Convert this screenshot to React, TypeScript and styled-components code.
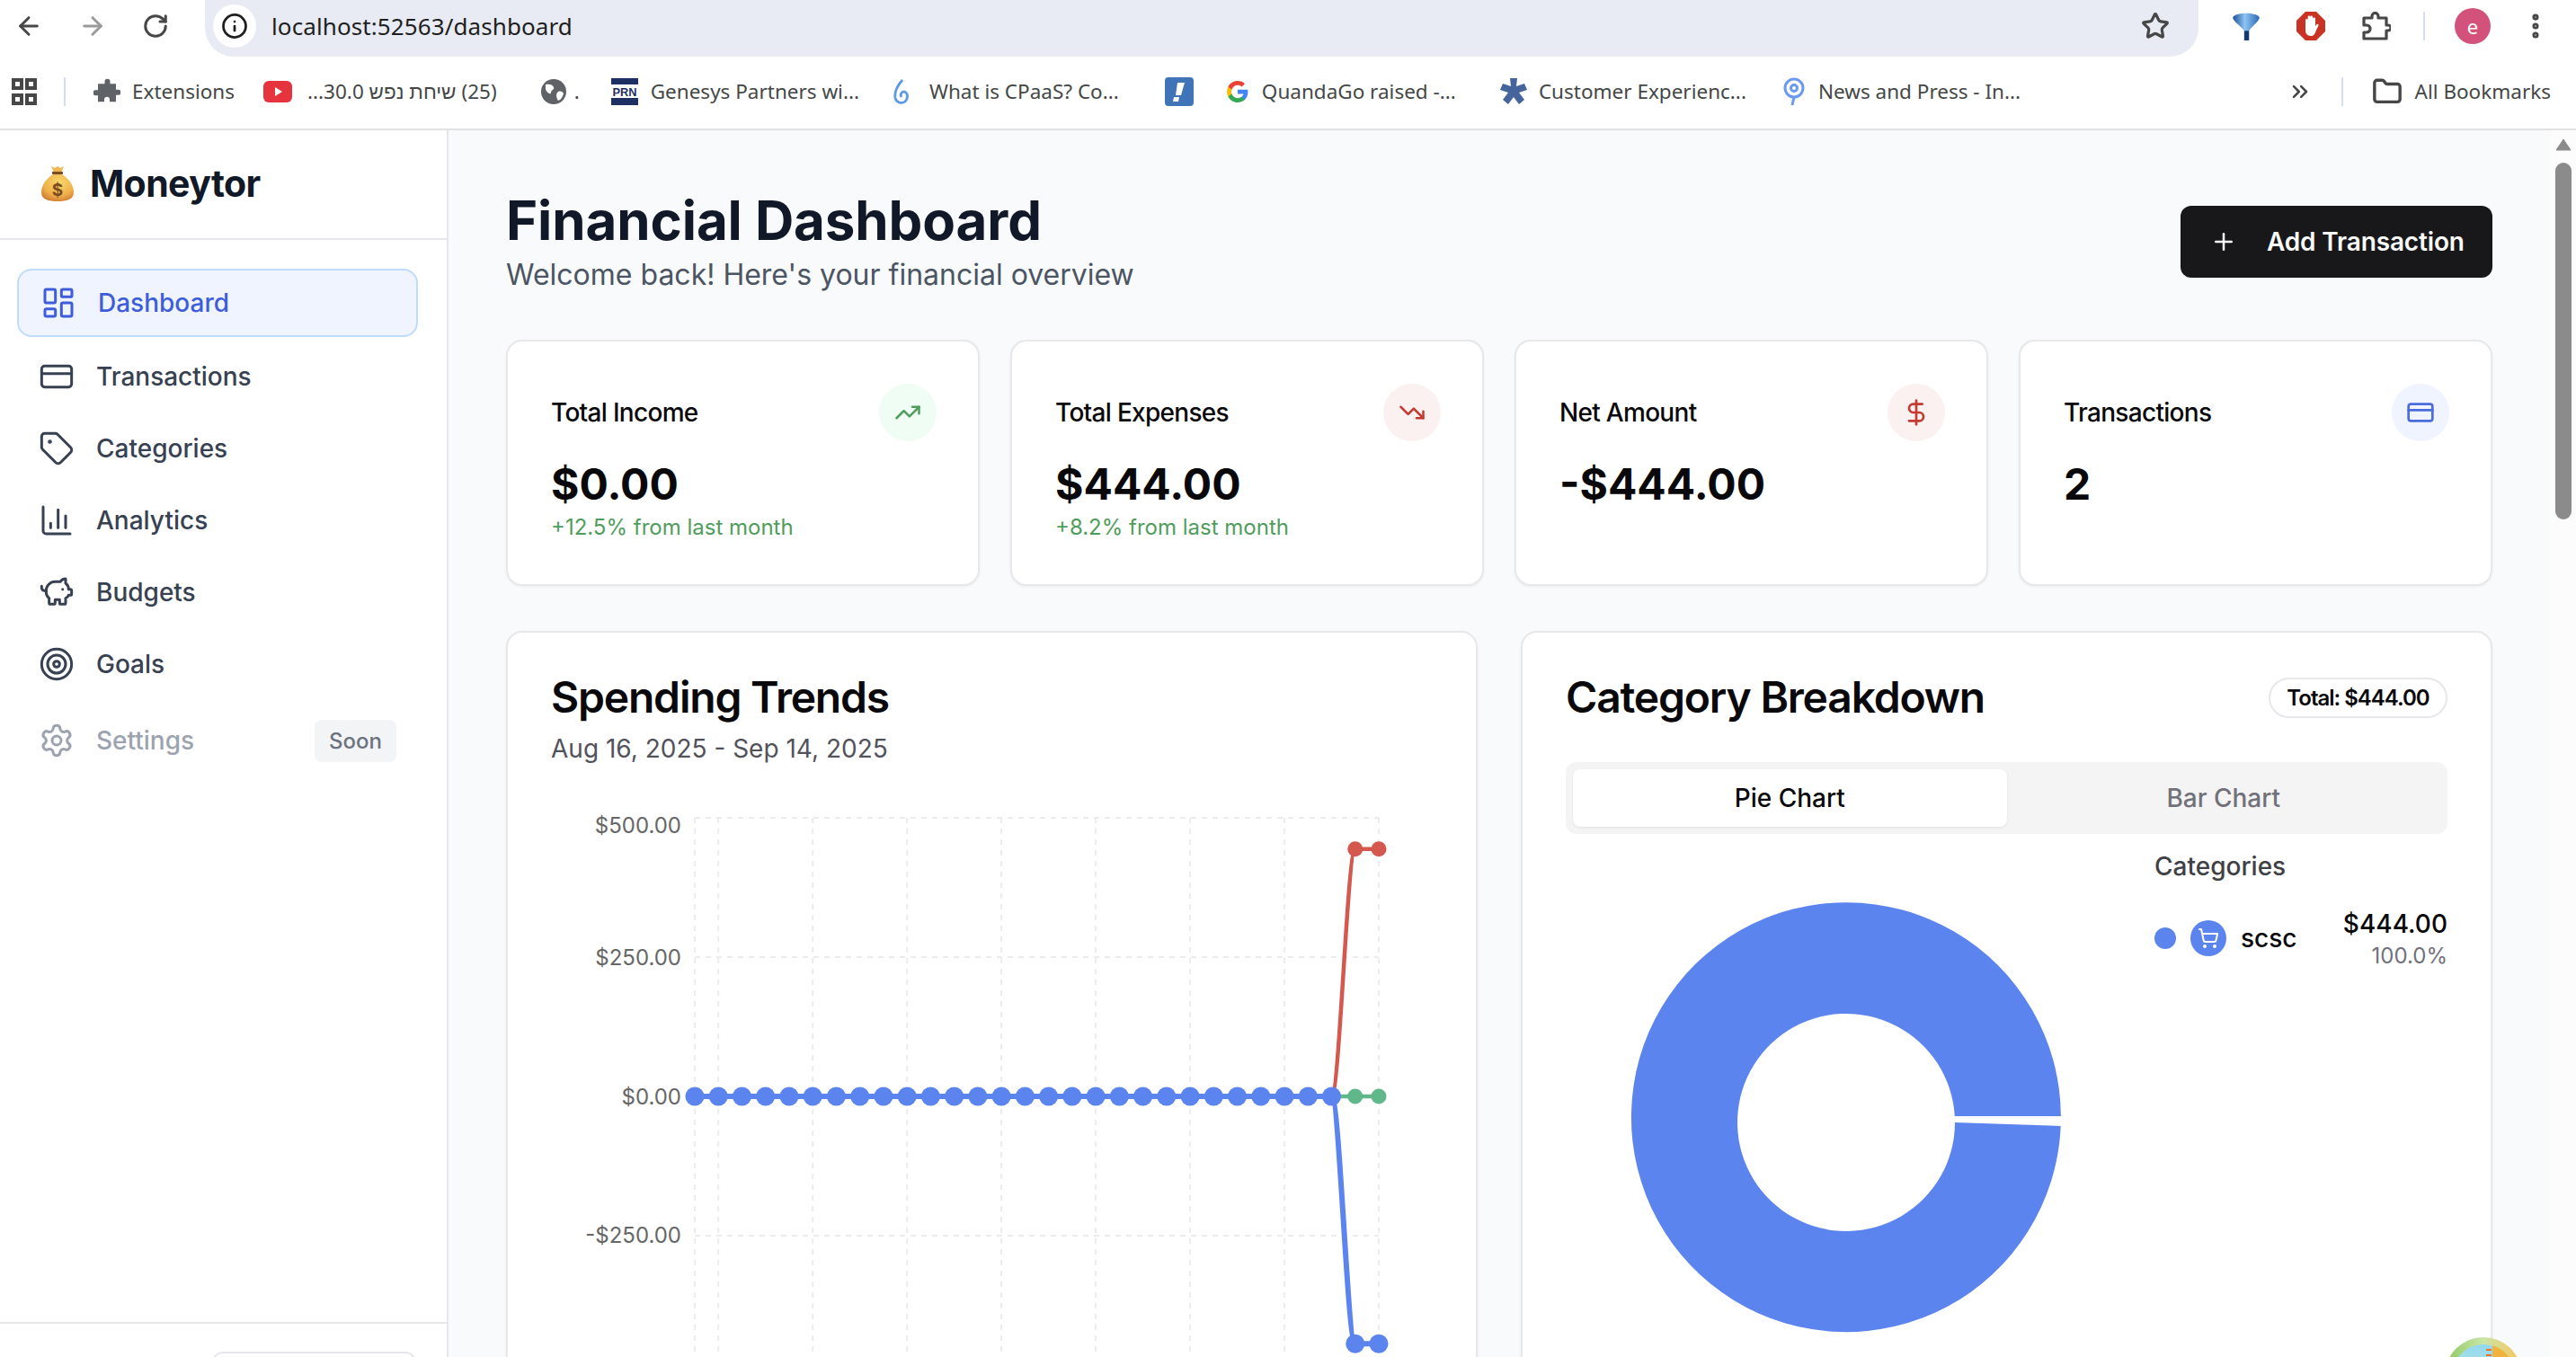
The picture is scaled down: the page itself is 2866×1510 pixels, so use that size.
import React, { FC, ReactNode } from 'react';
import styled, { createGlobalStyle } from 'styled-components';
import {
  ArrowLeft,
  ArrowRight,
  BarChart3,
  ChevronsRight,
  CreditCard,
  DollarSign,
  Folder,
  Info,
  LayoutDashboard,
  MoreVertical,
  PiggyBank,
  Plus,
  RotateCw,
  Settings,
  ShoppingCart,
  Star,
  Tag,
  Target,
  TrendingDown,
  TrendingUp,
} from 'lucide-react';

const GlobalStyle = createGlobalStyle`
  html, body {
    margin: 0;
    overflow: hidden;
    background: #fff;
  }
  * {
    box-sizing: border-box;
  }
`;

const Frame = styled.div`
  position: relative;
  width: 2866px;
  height: 1510px;
  overflow: hidden;
  display: flex;
  flex-direction: column;
  font-family: Inter, 'Liberation Sans', sans-serif;
`;

/* browser chrome */

const ToolBar = styled.div`
  height: 63px;
  display: flex;
  align-items: flex-start;
  padding-left: 16px;
  color: #474747;
`;

const NavButtons = styled.div`
  width: 212px;
  height: 58px;
  display: flex;
  align-items: center;
  gap: 39px;
`;

const AddressBar = styled.div`
  width: 2218px;
  height: 63px;
  background: #e8ebf3;
  border-radius: 0 0 32px 32px / 0 0 32px 32px;
  display: flex;
  align-items: center;
  padding: 0 32px 5px 9px;
`;

const InfoChip = styled.div`
  width: 48px;
  height: 48px;
  border-radius: 50%;
  background: #fff;
  display: flex;
  align-items: center;
  justify-content: center;
  color: #1f1f1f;
`;

const UrlText = styled.span`
  margin-left: 17px;
  font: 400 26px 'Noto Sans', sans-serif;
  letter-spacing: 0.1px;
  color: #1f1f1f;
  flex: 1;
`;

const ToolIcons = styled.div`
  height: 58px;
  display: flex;
  align-items: center;
  margin-left: 37px;
`;

const ToolGap = styled.span<{ $width: number }>`
  width: ${p => p.$width}px;
  flex-shrink: 0;
`;

const Divider = styled.div<{ $left?: number }>`
  width: 2px;
  height: 32px;
  margin-left: ${p => p.$left ?? 0}px;
  background: #d3def5;
`;

const Avatar = styled.div`
  width: 40px;
  height: 40px;
  border-radius: 50%;
  background: #d2527c;
  color: #fff;
  font: 400 22px 'Noto Sans', sans-serif;
  display: flex;
  align-items: center;
  justify-content: center;
`;

const BookmarkBar = styled.div`
  height: 82px;
  display: flex;
  align-items: center;
  padding: 0 28px 3px 13px;
  border-bottom: 2px solid #e1e1e1;
  color: #474747;
`;

const Bookmark = styled.div<{ $left: number; $gap?: number }>`
  display: flex;
  align-items: center;
  gap: ${p => p.$gap ?? 14}px;
  margin-left: ${p => p.$left}px;
  font: 400 22.5px 'Noto Sans', 'Liberation Sans', sans-serif;
  color: #444746;
  white-space: nowrap;
`;

const Spacer = styled.div`
  flex: 1;
`;

/* app shell */

const Workspace = styled.div`
  flex: 1;
  min-height: 0;
  display: flex;
`;

const Sidebar = styled.aside`
  width: 499px;
  flex-shrink: 0;
  background: #fff;
  border-right: 2px solid #e5e7eb;
  display: flex;
  flex-direction: column;
  overflow: hidden;
`;

const Brand = styled.div`
  height: 122px;
  flex-shrink: 0;
  display: flex;
  align-items: center;
  gap: 18px;
  padding: 0 0 3px 46px;
  border-bottom: 2px solid #e5e7eb;
`;

const BrandName = styled.span`
  font-size: 41px;
  font-weight: 700;
  letter-spacing: -0.6px;
  color: #111827;
`;

const Nav = styled.nav`
  flex: 1;
  display: flex;
  flex-direction: column;
  gap: 4px;
  padding: 32px 32px 0 19px;
`;

const NavItem = styled.div<{ $active?: boolean; $muted?: boolean }>`
  height: 76px;
  display: flex;
  align-items: center;
  gap: 24px;
  padding-left: 24px;
  margin-top: ${p => (p.$muted ? 5 : 0)}px;
  margin-bottom: ${p => (p.$active ? 2 : 0)}px;
  border-radius: 16px;
  border: ${p => (p.$active ? '2px solid #bfdbfe' : 'none')};
  background: ${p => (p.$active ? '#eff4fe' : 'transparent')};
  color: ${p => (p.$active ? '#3d5ddb' : p.$muted ? '#9ca3af' : '#374151')};
  font-size: 28px;
  font-weight: 500;
`;

const SoonTag = styled.span`
  margin-left: auto;
  margin-right: 24px;
  width: 91px;
  height: 47px;
  border-radius: 8px;
  background: #f3f4f6;
  color: #6b7280;
  font-size: 24px;
  font-weight: 500;
  display: flex;
  align-items: center;
  justify-content: center;
`;

const SidebarFoot = styled.div`
  height: 39px;
  flex-shrink: 0;
  border-top: 2px solid #e5e7eb;
  padding: 31px 34px 0 236px;
`;

const FootButton = styled.div`
  height: 60px;
  border: 2px solid #e5e7eb;
  border-radius: 12px;
`;

const Main = styled.main`
  flex: 1;
  min-width: 0;
  background: #f9fafb;
  padding: 67px 64px 0 64px;
`;

const PageHead = styled.header`
  display: flex;
  align-items: center;
  justify-content: space-between;
  margin-bottom: 44px;
`;

const PageTitle = styled.h1`
  margin: 0;
  font-size: 60px;
  line-height: 66px;
  font-weight: 700;
  letter-spacing: -0.1px;
  color: #111827;
`;

const PageSub = styled.p`
  margin: 0;
  font-size: 32px;
  line-height: 56px;
  color: #4b5563;
`;

const AddButton = styled.button`
  width: 347px;
  height: 80px;
  margin-bottom: 8px;
  border: none;
  border-radius: 12px;
  background: #18181b;
  color: #fafafa;
  display: flex;
  align-items: center;
  gap: 33px;
  padding: 0 0 0 33px;
  font: 600 28px Inter, sans-serif;
  letter-spacing: -0.15px;
`;

const StatGrid = styled.section`
  display: grid;
  grid-template-columns: repeat(4, 1fr);
  gap: 34px;
  margin-bottom: 50px;
`;

const Card = styled.div`
  background: #fff;
  border: 2px solid #e8e8ea;
  border-radius: 18px;
  box-shadow: 0 1px 3px rgba(0, 0, 0, 0.06);
`;

const StatCard = styled(Card)`
  padding: 47px 46px 46px 48px;
`;

const StatHead = styled.div`
  display: flex;
  align-items: center;
  justify-content: space-between;
`;

const StatLabel = styled.span`
  font-size: 28px;
  font-weight: 500;
  letter-spacing: -0.7px;
  color: #09090b;
`;

const StatBubble = styled.div<{ $bg: string; $fg: string }>`
  width: 64px;
  height: 64px;
  border-radius: 50%;
  background: ${p => p.$bg};
  color: ${p => p.$fg};
  display: flex;
  align-items: center;
  justify-content: center;
`;

const StatValue = styled.div`
  margin-top: 19px;
  font-size: 48px;
  line-height: 58px;
  font-weight: 700;
  color: #09090b;
`;

const StatDelta = styled.div`
  margin-top: 2px;
  font-size: 24px;
  line-height: 34px;
  color: #4f9d5c;
`;

const ChartGrid = styled.section`
  display: grid;
  grid-template-columns: repeat(2, 1fr);
  gap: 48px;
`;

const ChartCard = styled(Card)`
  height: 1000px;
  padding: 46px 48px;
`;

const CardTitle = styled.h2`
  margin: 0;
  font-size: 48px;
  line-height: 52px;
  font-weight: 600;
  letter-spacing: -1.2px;
  color: #09090b;
`;

const DateRange = styled.div`
  margin-top: 11px;
  font-size: 28px;
  line-height: 40px;
  color: #52525b;
`;

const TrendSvg = styled.svg`
  display: block;
  margin-top: 27px;
`;

const DonutSvg = styled.svg`
  display: block;
`;

const CardHead = styled.div`
  display: flex;
  align-items: center;
  justify-content: space-between;
`;

const TotalBadge = styled.span`
  height: 45px;
  width: 199px;
  border: 2px solid #e5e7eb;
  border-radius: 23px;
  display: flex;
  align-items: center;
  justify-content: center;
  font-size: 24px;
  font-weight: 600;
  letter-spacing: -1px;
  color: #09090b;
`;

const TabList = styled.div`
  margin-top: 46px;
  height: 80px;
  padding: 8px;
  border-radius: 12px;
  background: #f4f4f5;
  display: grid;
  grid-template-columns: 1fr 1fr;
`;

const Tab = styled.div<{ $active?: boolean }>`
  border-radius: 8px;
  display: flex;
  align-items: center;
  justify-content: center;
  font-size: 28px;
  font-weight: 500;
  color: ${p => (p.$active ? '#09090b' : '#71717a')};
  background: ${p => (p.$active ? '#fff' : 'transparent')};
  box-shadow: ${p => (p.$active ? '0 1px 3px rgba(0,0,0,.08)' : 'none')};
`;

const BreakdownBody = styled.div`
  margin-top: 16px;
  display: flex;
`;

const DonutPane = styled.div`
  width: 655px;
  flex-shrink: 0;
`;

const Legend = styled.div`
  flex: 1;
`;

const LegendTitle = styled.div`
  font-size: 28px;
  line-height: 40px;
  font-weight: 500;
  color: #3f3f46;
`;

const LegendRow = styled.div`
  margin-top: 24px;
  display: flex;
  align-items: center;
`;

const LegendDot = styled.span`
  width: 24px;
  height: 24px;
  border-radius: 50%;
  background: #5b84ee;
`;

const LegendIcon = styled.span`
  width: 40px;
  height: 40px;
  margin-left: 16px;
  border-radius: 50%;
  background: #5b84ee;
  color: #fff;
  display: flex;
  align-items: center;
  justify-content: center;
`;

const LegendName = styled.span`
  margin-left: 16px;
  font-size: 28px;
  font-weight: 500;
  color: #09090b;
`;

const LegendFigures = styled.div`
  margin-left: auto;
  text-align: right;
`;

const LegendAmount = styled.div`
  font-size: 28px;
  line-height: 40px;
  font-weight: 500;
  color: #09090b;
`;

const LegendShare = styled.div`
  font-size: 24px;
  line-height: 32px;
  color: #71717a;
`;

const ScrollRail = styled.div`
  width: 29px;
  flex-shrink: 0;
  background: #fcfcfc;
  padding: 9px 5px 0 6px;
  display: flex;
  flex-direction: column;
`;

const ScrollThumb = styled.div`
  width: 18px;
  height: 397px;
  margin-top: 13px;
  border-radius: 9px;
  background: #8b8b8b;
`;

const CornerBadge = styled.svg`
  position: absolute;
  left: 2720px;
  top: 1488px;
`;

/* favicons and other small drawings */

const Apps = () => (
  <svg width="28" height="30" viewBox="0 0 28 30" fill="none" stroke="#474747" strokeWidth="4">
    <rect x="2" y="2" width="9" height="9" />
    <rect x="17" y="2" width="9" height="9" />
    <rect x="2" y="19" width="9" height="9" />
    <rect x="17" y="19" width="9" height="9" />
  </svg>
);

const PuzzleSolid = ({ color = '#5f6368', size = 30 }: { color?: string; size?: number }) => (
  <svg width={size} height={size} viewBox="0 0 24 24" fill={color}>
    <path d="M10 3a2.4 2.4 0 0 1 4.8 0V5H20v5.2h2a2.4 2.4 0 0 1 0 4.8h-2V21h-5.6v-2a2.4 2.4 0 0 0-4.8 0v2H4v-5.6H2a2.4 2.4 0 0 1 0-4.8h2V5h6z" />
  </svg>
);

const YouTube = () => (
  <svg width="32" height="24" viewBox="0 0 32 24">
    <rect width="32" height="24" rx="6" fill="#e5343d" />
    <path d="M13 7l8 5-8 5z" fill="#fff" />
  </svg>
);

const Globe = () => (
  <svg width="30" height="30" viewBox="0 0 30 30">
    <circle cx="15" cy="15" r="14" fill="#5f6368" />
    <path d="M6 7c4-1 8 0 9 3s-3 3-3 6-5 0-6-4zM20 15c3-1 5 0 6 2-1 4-3 7-6 8-2-3-3-8 0-10z" fill="#fff" />
  </svg>
);

const Prn = () => (
  <svg width="30" height="30" viewBox="0 0 30 30">
    <rect width="30" height="30" fill="#1e2f63" />
    <rect y="7" width="30" height="15" fill="#fff" />
    <text x="15" y="20" textAnchor="middle" fontFamily="Liberation Sans" fontWeight="700" fontSize="13" fill="#1e2f63" textLength="27" lengthAdjust="spacingAndGlyphs">
      PRN
    </text>
  </svg>
);

const Curl = () => (
  <svg width="18" height="30" viewBox="0 0 18 30" fill="none" stroke="#5c9ae6" strokeWidth="2.8">
    <path d="M10 2C3 10 1 16 2 22c1 5 7 7 11 4 4-4 3-10-1-11-3 0-5 3-3 6" />
  </svg>
);

const BlueBang = () => (
  <svg width="32" height="32" viewBox="0 0 32 32">
    <rect width="32" height="32" rx="4" fill="#3f74b8" />
    <path d="M14 6h8l-4 14h-6zM10 22h6l-1 5H9z" fill="#fff" />
  </svg>
);

const GoogleG = () => (
  <svg width="26" height="26" viewBox="0 0 48 48">
    <path fill="#4285f4" d="M45 24.5c0-1.6-.1-3.1-.4-4.5H24v8.5h11.8c-.5 2.7-2 5-4.4 6.6v5.5h7.1C42.700 36.700 45 31.100 45 24.500z" />
    <path fill="#34a853" d="M24 46c5.900 0 10.900-2 14.500-5.300l-7.100-5.500c-2 1.300-4.500 2.100-7.400 2.100-5.700 0-10.500-3.800-12.200-9H4.500v5.700C8.100 41.100 15.500 46 24 46z" />
    <path fill="#fbbc05" d="M11.800 28.300c-.4-1.300-.7-2.800-.7-4.300s.3-3 .7-4.300V14H4.500C3 17 2 20.400 2 24s1 7 2.500 10z" />
    <path fill="#ea4335" d="M24 10.700c3.200 0 6.100 1.100 8.400 3.300l6.300-6.300C34.900 4.100 29.900 2 24 2 15.500 2 8.100 6.900 4.500 14l7.300 5.700c1.700-5.200 6.500-9 12.200-9z" />
  </svg>
);

const BlueAsterisk = () => (
  <svg width="32" height="32" viewBox="0 0 32 32" fill="#45649c">
    <path d="M12 1h8l-1 9 9-3 3 7-9 3 6 8-6 5-6-8-6 8-6-5 6-8-9-3 3-7 9 3z" />
  </svg>
);

const NewsPin = () => (
  <svg width="26" height="32" viewBox="0 0 26 32" fill="none" stroke="#6a9bf0" strokeWidth="3">
    <circle cx="13" cy="12" r="10" />
    <circle cx="13" cy="12" r="3.500" />
    <path d="M13 22l-2 9" />
  </svg>
);

const Funnel = () => (
  <svg width="32" height="34" viewBox="0 0 30 32">
    <defs>
      <linearGradient id="funnelFill" x1="0" y1="0" x2="1" y2="0">
        <stop offset="0" stopColor="#1c4f96" />
        <stop offset="0.45" stopColor="#8fc4f2" />
        <stop offset="1" stopColor="#2869b8" />
      </linearGradient>
    </defs>
    <path d="M1 7C3 1 27 1 29 7c-1 5-9 10-11 14v10h-5V21C11 17 2 12 1 7z" fill="url(#funnelFill)" />
    <path d="M13 21h5v10h-5z" fill="#123a70" />
  </svg>
);

const StopHand = () => (
  <svg width="32" height="32" viewBox="0 0 32 32">
    <path d="M10 0h12l10 10v12L22 32H10L0 22V10z" fill="#c93323" />
    <path d="M10 17V9a1.400 1.400 0 0 1 2.600 0V6a1.400 1.400 0 0 1 2.800 0v0a1.400 1.400 0 0 1 2.800 0v2a1.400 1.400 0 0 1 2.800 0v8l1.600-2c1.200-1 2.500.2 1.800 1.500L20 25c-1 1.500-2 2-4 2-4 0-6-3-6-6z" fill="#fff" />
  </svg>
);

const ExtensionOutline = () => (
  <svg width="32" height="32" viewBox="0 0 32 32" fill="none" stroke="#474747" strokeWidth="3.200" strokeLinejoin="round">
    <path d="M2 7h9V5a3.500 3.500 0 0 1 7 0v2h9v8h2a2.800 2.800 0 0 1 0 6h-2v9H2v-7h3a4 4 0 0 0 0-8H2z" />
  </svg>
);

const MoneyBag = () => (
  <svg width="36" height="42" viewBox="0 0 36 42">
    <defs>
      <radialGradient id="bagFill" cx="0.55" cy="0.3" r="0.8">
        <stop offset="0" stopColor="#f8d86a" />
        <stop offset="0.6" stopColor="#efb04a" />
        <stop offset="1" stopColor="#c9702a" />
      </radialGradient>
    </defs>
    <path d="M11 2l4 2 3-2 3 2 4-2-3 7h-8z" fill="#f0b54e" />
    <rect x="12" y="8" width="12" height="3" rx="1" fill="#7a4a22" />
    <path d="M13 11h10c7 4 13 12 13 20 0 8-8 10-18 10S0 39 0 31c0-8 6-16 13-20z" fill="url(#bagFill)" />
    <text x="18" y="35" textAnchor="middle" fontFamily="Inter" fontWeight="700" fontSize="19" fill="#7a4a22">
      $
    </text>
  </svg>
);

/* charts */

const PLOT = { left: 160, right: 921, top: 30, zero: 340, unit: 0.62 };
const POINTS = 30;
const stepX = (PLOT.right - PLOT.left) / (POINTS - 1);
const pointX = (i: number) => PLOT.left + i * stepX;
const valueY = (v: number) => PLOT.zero - v * PLOT.unit;
const GRID_X = [0, 1, 5, 9, 13, 17, 21, 25, 29];
const GRID_Y = [500, 250, -250, -500];

const series = (last: number) => Array.from({ length: POINTS }, (_, i) => (i >= 28 ? last : 0));

// flat tangents at each point, close enough to a monotone curve for this data
const curve = (values: number[]) =>
  values
    .map((v, i) => {
      if (i === 0) return `M${pointX(0)} ${valueY(v)}`;
      const third = stepX / 3;
      return `C${pointX(i - 1) + third} ${valueY(values[i - 1])} ${pointX(i) - third} ${valueY(v)} ${pointX(i)} ${valueY(v)}`;
    })
    .join(' ');

const YTick: FC<{ y: number; children: ReactNode }> = ({ y, children }) => (
  <text x={145} y={y} textAnchor="end" dominantBaseline="central" fontFamily="Inter" fontSize="24" fill="#666">
    {children}
  </text>
);

const TrendChart = () => {
  const income = series(0);
  const expense = series(444);
  const net = series(-444);

  return (
    <TrendSvg width="980" height="680" viewBox="0 0 980 680">
      <g stroke="#ececec" strokeWidth="2" strokeDasharray="6 6" fill="none">
        {GRID_X.map(i => (
          <line key={i} x1={pointX(i)} x2={pointX(i)} y1={PLOT.top} y2={680} />
        ))}
        {GRID_Y.map(v => (
          <line key={v} x1={PLOT.left} x2={PLOT.right} y1={valueY(v)} y2={valueY(v)} />
        ))}
      </g>
      <YTick y={38}>$500.00</YTick>
      <YTick y={185}>$250.00</YTick>
      <YTick y={340}>$0.00</YTick>
      <YTick y={494}>-$250.00</YTick>

      <path d={curve(income)} fill="none" stroke="#5fb78a" strokeWidth="4.500" />
      {income.map((v, i) => (
        <circle key={i} cx={pointX(i)} cy={valueY(v)} r="8.500" fill="#5fb78a" />
      ))}
      <path d={curve(expense)} fill="none" stroke="#d5584f" strokeWidth="4.500" />
      {expense.map((v, i) => (
        <circle key={i} cx={pointX(i)} cy={valueY(v)} r="8.500" fill={i >= 28 ? '#d5584f' : 'transparent'} />
      ))}
      <path d={curve(net)} fill="none" stroke="#5b84ee" strokeWidth="6" />
      {net.map((v, i) => (
        <circle key={i} cx={pointX(i)} cy={valueY(v)} r="10.500" fill="#5b84ee" />
      ))}
    </TrendSvg>
  );
};

const DONUT = { cx: 312, cy: 305, outer: 239, inner: 121 };

const DonutChart = () => {
  const { cx, cy, outer, inner } = DONUT;
  // one slice of 100%, the small gap at three o'clock is the padding angle of the pie
  const d = [
    `M${cx + outer - 0.3} ${cy + 4}`,
    `A${outer} ${outer} 0 1 1 ${cx + outer - 0.1} ${cy - 7}`,
    `L${cx + inner - 0.2} ${cy - 7}`,
    `A${inner} ${inner} 0 1 0 ${cx + inner} ${cy}`,
    'Z',
  ].join(' ');

  return (
    <DonutSvg width="655" height="600" viewBox="0 0 655 600">
      <path d={d} fill="#5b84ee" />
    </DonutSvg>
  );
};

const STATS = [
  { label: 'Total Income', value: '$0.00', delta: '+12.5% from last month', bg: '#f0fdf4', fg: '#4f9d5c', icon: <TrendingUp size={30} /> },
  { label: 'Total Expenses', value: '$444.00', delta: '+8.2% from last month', bg: '#faf1f0', fg: '#c53a30', icon: <TrendingDown size={30} /> },
  { label: 'Net Amount', value: '-$444.00', bg: '#faf1f0', fg: '#c53a30', icon: <DollarSign size={32} /> },
  { label: 'Transactions', value: '2', bg: '#eff4fe', fg: '#4a6cdc', icon: <CreditCard size={32} /> },
];

const NAV_ITEMS = [
  { label: 'Transactions', icon: <CreditCard size={40} strokeWidth={1.8} /> },
  { label: 'Categories', icon: <Tag size={40} strokeWidth={1.8} /> },
  { label: 'Analytics', icon: <BarChart3 size={40} strokeWidth={1.8} /> },
  { label: 'Budgets', icon: <PiggyBank size={40} strokeWidth={1.8} /> },
  { label: 'Goals', icon: <Target size={40} strokeWidth={1.8} /> },
];

const App: FC = () => (
  <Frame>
    <GlobalStyle />
    <ToolBar>
      <NavButtons>
        <ArrowLeft size={32} strokeWidth={2.2} />
        <ArrowRight size={32} strokeWidth={2.2} color="#9a9a9a" />
        <RotateCw size={30} strokeWidth={2.4} />
      </NavButtons>
      <AddressBar>
        <InfoChip>
          <Info size={30} strokeWidth={2.2} />
        </InfoChip>
        <UrlText>localhost:52563/dashboard</UrlText>
        <Star size={32} strokeWidth={2.4} />
      </AddressBar>
      <ToolIcons>
        <Funnel />
        <ToolGap $width={40} />
        <StopHand />
        <ToolGap $width={41} />
        <ExtensionOutline />
        <ToolGap $width={36} />
        <Divider />
        <ToolGap $width={33} />
        <Avatar>e</Avatar>
        <ToolGap $width={33} />
        <MoreVertical size={34} strokeWidth={3} />
      </ToolIcons>
    </ToolBar>
    <BookmarkBar>
      <Apps />
      <Divider $left={30} />
      <Bookmark $left={31} $gap={13}>
        <PuzzleSolid />
        <span>Extensions</span>
      </Bookmark>
      <Bookmark $left={32} $gap={17}>
        <YouTube />
        <span dir="rtl">(25) שיחת נפש 30.0...</span>
      </Bookmark>
      <Bookmark $left={48} $gap={8}>
        <Globe />
        <span>.</span>
      </Bookmark>
      <Bookmark $left={35}>
        <Prn />
        <span>Genesys Partners wi...</span>
      </Bookmark>
      <Bookmark $left={38} $gap={22}>
        <Curl />
        <span>What is CPaaS? Co...</span>
      </Bookmark>
      <Bookmark $left={51}>
        <BlueBang />
      </Bookmark>
      <Bookmark $left={36}>
        <GoogleG />
        <span>QuandaGo raised -...</span>
      </Bookmark>
      <Bookmark $left={48} $gap={12}>
        <BlueAsterisk />
        <span>Customer Experienc...</span>
      </Bookmark>
      <Bookmark $left={40}>
        <NewsPin />
        <span>News and Press - In...</span>
      </Bookmark>
      <Spacer />
      <ChevronsRight size={28} strokeWidth={2.2} />
      <Divider $left={32} />
      <Bookmark $left={32}>
        <Folder size={34} strokeWidth={2.4} color="#474747" />
        <span>All Bookmarks</span>
      </Bookmark>
    </BookmarkBar>

    <Workspace>
      <Sidebar>
        <Brand>
          <MoneyBag />
          <BrandName>Moneytor</BrandName>
        </Brand>
        <Nav>
          <NavItem $active>
            <LayoutDashboard size={40} strokeWidth={1.8} />
            Dashboard
          </NavItem>
          {NAV_ITEMS.map(item => (
            <NavItem key={item.label}>
              {item.icon}
              {item.label}
            </NavItem>
          ))}
          <NavItem $muted>
            <Settings size={40} strokeWidth={1.8} />
            Settings
            <SoonTag>Soon</SoonTag>
          </NavItem>
        </Nav>
        <SidebarFoot>
          <FootButton />
        </SidebarFoot>
      </Sidebar>

      <Main>
        <PageHead>
          <div>
            <PageTitle>Financial Dashboard</PageTitle>
            <PageSub>Welcome back! Here's your financial overview</PageSub>
          </div>
          <AddButton>
            <Plus size={30} strokeWidth={2} />
            Add Transaction
          </AddButton>
        </PageHead>

        <StatGrid>
          {STATS.map(s => (
            <StatCard key={s.label}>
              <StatHead>
                <StatLabel>{s.label}</StatLabel>
                <StatBubble $bg={s.bg} $fg={s.fg}>
                  {s.icon}
                </StatBubble>
              </StatHead>
              <StatValue>{s.value}</StatValue>
              {s.delta && <StatDelta>{s.delta}</StatDelta>}
            </StatCard>
          ))}
        </StatGrid>

        <ChartGrid>
          <ChartCard>
            <CardTitle>Spending Trends</CardTitle>
            <DateRange>Aug 16, 2025 - Sep 14, 2025</DateRange>
            <TrendChart />
          </ChartCard>
          <ChartCard>
            <CardHead>
              <CardTitle>Category Breakdown</CardTitle>
              <TotalBadge>Total: $444.00</TotalBadge>
            </CardHead>
            <TabList>
              <Tab $active>Pie Chart</Tab>
              <Tab>Bar Chart</Tab>
            </TabList>
            <BreakdownBody>
              <DonutPane>
                <DonutChart />
              </DonutPane>
              <Legend>
                <LegendTitle>Categories</LegendTitle>
                <LegendRow>
                  <LegendDot />
                  <LegendIcon>
                    <ShoppingCart size={24} strokeWidth={2} />
                  </LegendIcon>
                  <LegendName>scsc</LegendName>
                  <LegendFigures>
                    <LegendAmount>$444.00</LegendAmount>
                    <LegendShare>100.0%</LegendShare>
                  </LegendFigures>
                </LegendRow>
              </Legend>
            </BreakdownBody>
          </ChartCard>
        </ChartGrid>
      </Main>

      <ScrollRail>
        <svg width="18" height="14" viewBox="0 0 18 14">
          <path d="M9 1l8 12H1z" fill="#8b8b8b" stroke="#8b8b8b" strokeLinejoin="round" />
        </svg>
        <ScrollThumb />
      </ScrollRail>
    </Workspace>

    <CornerBadge width="86" height="22" viewBox="0 0 86 22">
      <defs>
        <linearGradient id="ringFill" x1="0" y1="0" x2="1" y2="0">
          <stop offset="0" stopColor="#8fc85f" />
          <stop offset="0.5" stopColor="#c9e6a8" />
          <stop offset="1" stopColor="#fbc45a" />
        </linearGradient>
        <linearGradient id="skyFill" x1="0" y1="0" x2="0" y2="1">
          <stop offset="0" stopColor="#92d8f2" />
          <stop offset="1" stopColor="#d8efb8" />
        </linearGradient>
      </defs>
      <circle cx="43" cy="43" r="43" fill="url(#ringFill)" />
      <circle cx="43" cy="43" r="35" fill="url(#skyFill)" />
      <path d="M53 9A35 35 0 0 1 78 43H53z" fill="#f1b33e" />
      <path d="M46 14h6M46 20h6" stroke="#e8742a" strokeWidth="2" />
    </CornerBadge>
  </Frame>
);

export default App;
